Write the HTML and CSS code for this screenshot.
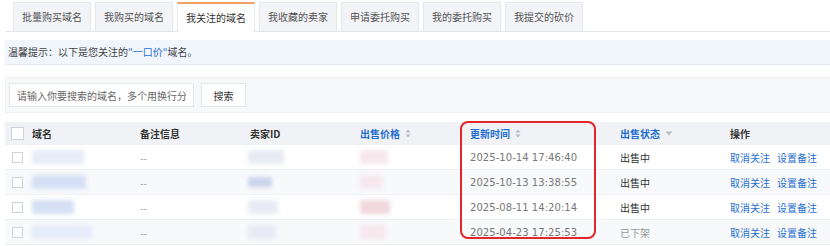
FILE: index.html
```html
<!DOCTYPE html>
<html>
<head>
    <title>我关注的域名</title>
    <link rel="stylesheet" href="styles.css">
</head>
<body>
    <div class="page">
        <div class="tabs">
            <div class="tab">批量购买域名</div>
            <div class="tab">我购买的域名</div>
            <div class="tab active">我关注的域名</div>
            <div class="tab">我收藏的卖家</div>
            <div class="tab">申请委托购买</div>
            <div class="tab">我的委托购买</div>
            <div class="tab">我提交的砍价</div>
        </div>

        <div class="notice">温馨提示：以下是您关注的<span class="hl">"一口价"</span>域名。</div>

        <div class="search-bar">
            <input type="text" class="search-input" placeholder="请输入你要搜索的域名，多个用换行分割">
            <button class="search-btn">搜索</button>
        </div>

        <div class="table">
            <div class="row head">
                <div class="cell c-check"><span class="checkbox"></span></div>
                <div class="cell">域名</div>
                <div class="cell">备注信息</div>
                <div class="cell">卖家ID</div>
                <div class="cell sort">出售价格 <svg class="sort-ico" width="6" height="9" viewBox="0 0 6 9"><path d="M3 0.5 L5.5 3.5 H0.5 Z M3 8.5 L5.5 5.5 H0.5 Z" fill="#b8bcc4"/></svg></div>
                <div class="cell sort">更新时间 <svg class="sort-ico" width="6" height="9" viewBox="0 0 6 9"><path d="M3 0.5 L5.5 3.5 H0.5 Z M3 8.5 L5.5 5.5 H0.5 Z" fill="#b8bcc4"/></svg></div>
                <div class="cell sort">出售状态 <svg class="sort-ico" width="8" height="5" viewBox="0 0 8 5"><path d="M0.5 0.5 H7.5 L4 4.5 Z" fill="#b8bcc4"/></svg></div>
                <div class="cell">操作</div>
            </div>

            <div class="row">
                <div class="cell c-check"><span class="checkbox"></span></div>
                <div class="cell"><span class="blur b-domain" style="width:52px"></span></div>
                <div class="cell muted">--</div>
                <div class="cell"><span class="blur b-id" style="width:36px"></span></div>
                <div class="cell"><span class="blur b-price" style="width:28px"></span></div>
                <div class="cell time">2025-10-14 17:46:40</div>
                <div class="cell">出售中</div>
                <div class="cell ops"><a>取消关注</a><a>设置备注</a></div>
            </div>
            <div class="row alt">
                <div class="cell c-check"><span class="checkbox"></span></div>
                <div class="cell"><span class="blur b-domain dark" style="width:54px"></span></div>
                <div class="cell muted">--</div>
                <div class="cell"><span class="blur b-id dark" style="width:24px"></span></div>
                <div class="cell"><span class="blur b-price" style="width:22px"></span></div>
                <div class="cell time">2025-10-13 13:38:55</div>
                <div class="cell">出售中</div>
                <div class="cell ops"><a>取消关注</a><a>设置备注</a></div>
            </div>
            <div class="row">
                <div class="cell c-check"><span class="checkbox"></span></div>
                <div class="cell"><span class="blur b-domain dark" style="width:42px"></span></div>
                <div class="cell muted">--</div>
                <div class="cell"><span class="blur b-id" style="width:30px"></span></div>
                <div class="cell"><span class="blur b-price dark" style="width:30px"></span></div>
                <div class="cell time">2025-08-11 14:20:14</div>
                <div class="cell">出售中</div>
                <div class="cell ops"><a>取消关注</a><a>设置备注</a></div>
            </div>
            <div class="row alt">
                <div class="cell c-check"><span class="checkbox"></span></div>
                <div class="cell"><span class="blur b-domain" style="width:60px"></span></div>
                <div class="cell muted">--</div>
                <div class="cell"><span class="blur b-id" style="width:28px"></span></div>
                <div class="cell"><span class="blur b-price" style="width:26px"></span></div>
                <div class="cell time">2025-04-23 17:25:53</div>
                <div class="cell muted">已下架</div>
                <div class="cell ops"><a>取消关注</a><a>设置备注</a></div>
            </div>

            <div class="highlight-box"></div>
        </div>
    </div>
</body>
</html>
```

FILE: styles.css
```css
body {
    margin: 0;
    background-color: #ffffff;
    font-family: "Noto Sans CJK SC", "Noto Sans", sans-serif;
    font-size: 10px;
    color: #333;
    overflow: hidden;
}
.page {
    padding-left: 5px;
}
.tabs {
    display: flex;
    gap: 4px;
    padding: 2px 0 0 8px;
    border-bottom: 1px solid #e3e5ea;
    height: 29px;
}
.tab {
    width: 76px;
    height: 28px;
    line-height: 28px;
    text-align: center;
    background-color: #f3f4f8;
    border: 1px solid #e6e8ee;
    border-bottom: none;
    color: #555;
}
.tab.active {
    background-color: #ffffff;
    border-top: 2px solid #f3a062;
    height: 28px;
    line-height: 27px;
    color: #333;
    position: relative;
    z-index: 1;
}
.notice {
    margin-top: 8px;
    height: 24px;
    line-height: 24px;
    padding-left: 3px;
    background-color: #f1f6fd;
    border-bottom: 1px solid #e2e9f2;
    color: #444;
}
.notice .hl {
    color: #1f6fd1;
}
.search-bar {
    margin-top: 12px;
    display: flex;
    gap: 7px;
    padding: 5px 3px;
    background-color: #f7f8fa;
    border: 1px solid #eef0f3;
    border-right: none;
}
.search-input {
    width: 185px;
    height: 24px;
    box-sizing: border-box;
    border: 1px solid #e4e6ea;
    background-color: #fff;
    padding: 0 7px;
    font-family: inherit;
    font-size: 10px;
    outline: none;
}
.search-input::placeholder {
    color: #666;
}
.search-btn {
    width: 45px;
    height: 24px;
    border: 1px solid #e4e6ea;
    background-color: #fff;
    font-family: inherit;
    font-size: 10px;
    color: #333;
    padding: 0;
}
.table {
    position: relative;
    margin-top: 9px;
}
.row {
    display: grid;
    grid-template-columns: 27px 108px 110px 110px 110px 150px 110px 1fr;
    height: 25px;
    align-items: center;
    border-bottom: 1px solid #eef0f3;
    box-sizing: border-box;
}
.row.head {
    height: 23px;
    background-color: #f1f2f5;
    font-weight: bold;
    color: #333;
}
.row.alt {
    background-color: #f8f9fb;
}
.cell {
    white-space: nowrap;
    display: flex;
    align-items: center;
}
.c-check {
    padding-left: 7px;
}
.checkbox {
    width: 9px;
    height: 9px;
    border: 1px solid #cfd2d8;
    background-color: #fff;
    display: inline-block;
}
.head .checkbox {
    width: 11px;
    height: 11px;
    margin-left: -1px;
}
.sort {
    color: #1f6fd1;
}
.sort-ico {
    margin-left: 5px;
}
.muted {
    color: #999;
}
.time {
    font-family: "DejaVu Sans", sans-serif;
    font-size: 10px;
    color: #777;
    letter-spacing: 0.05px;
}
.ops a {
    color: #1f6fd1;
    margin-right: 7px;
}
.blur {
    display: inline-block;
    height: 14px;
    filter: blur(2px);
    border-radius: 2px;
}
.b-domain {
    background-color: #e6ecf8;
}
.b-domain.dark {
    background-color: #d6e0f4;
}
.b-id {
    background-color: #e8ebf3;
    margin-left: -2px;
}
.b-id.dark {
    background-color: #c9d3ea;
    height: 10px;
}
.b-price {
    background-color: #f6e8ec;
}
.b-price.dark {
    background-color: #f0d8de;
}
.highlight-box {
    position: absolute;
    left: 455px;
    top: -1px;
    width: 132px;
    height: 114px;
    border: 2.5px solid #e3262b;
    border-radius: 8px;
}
```
